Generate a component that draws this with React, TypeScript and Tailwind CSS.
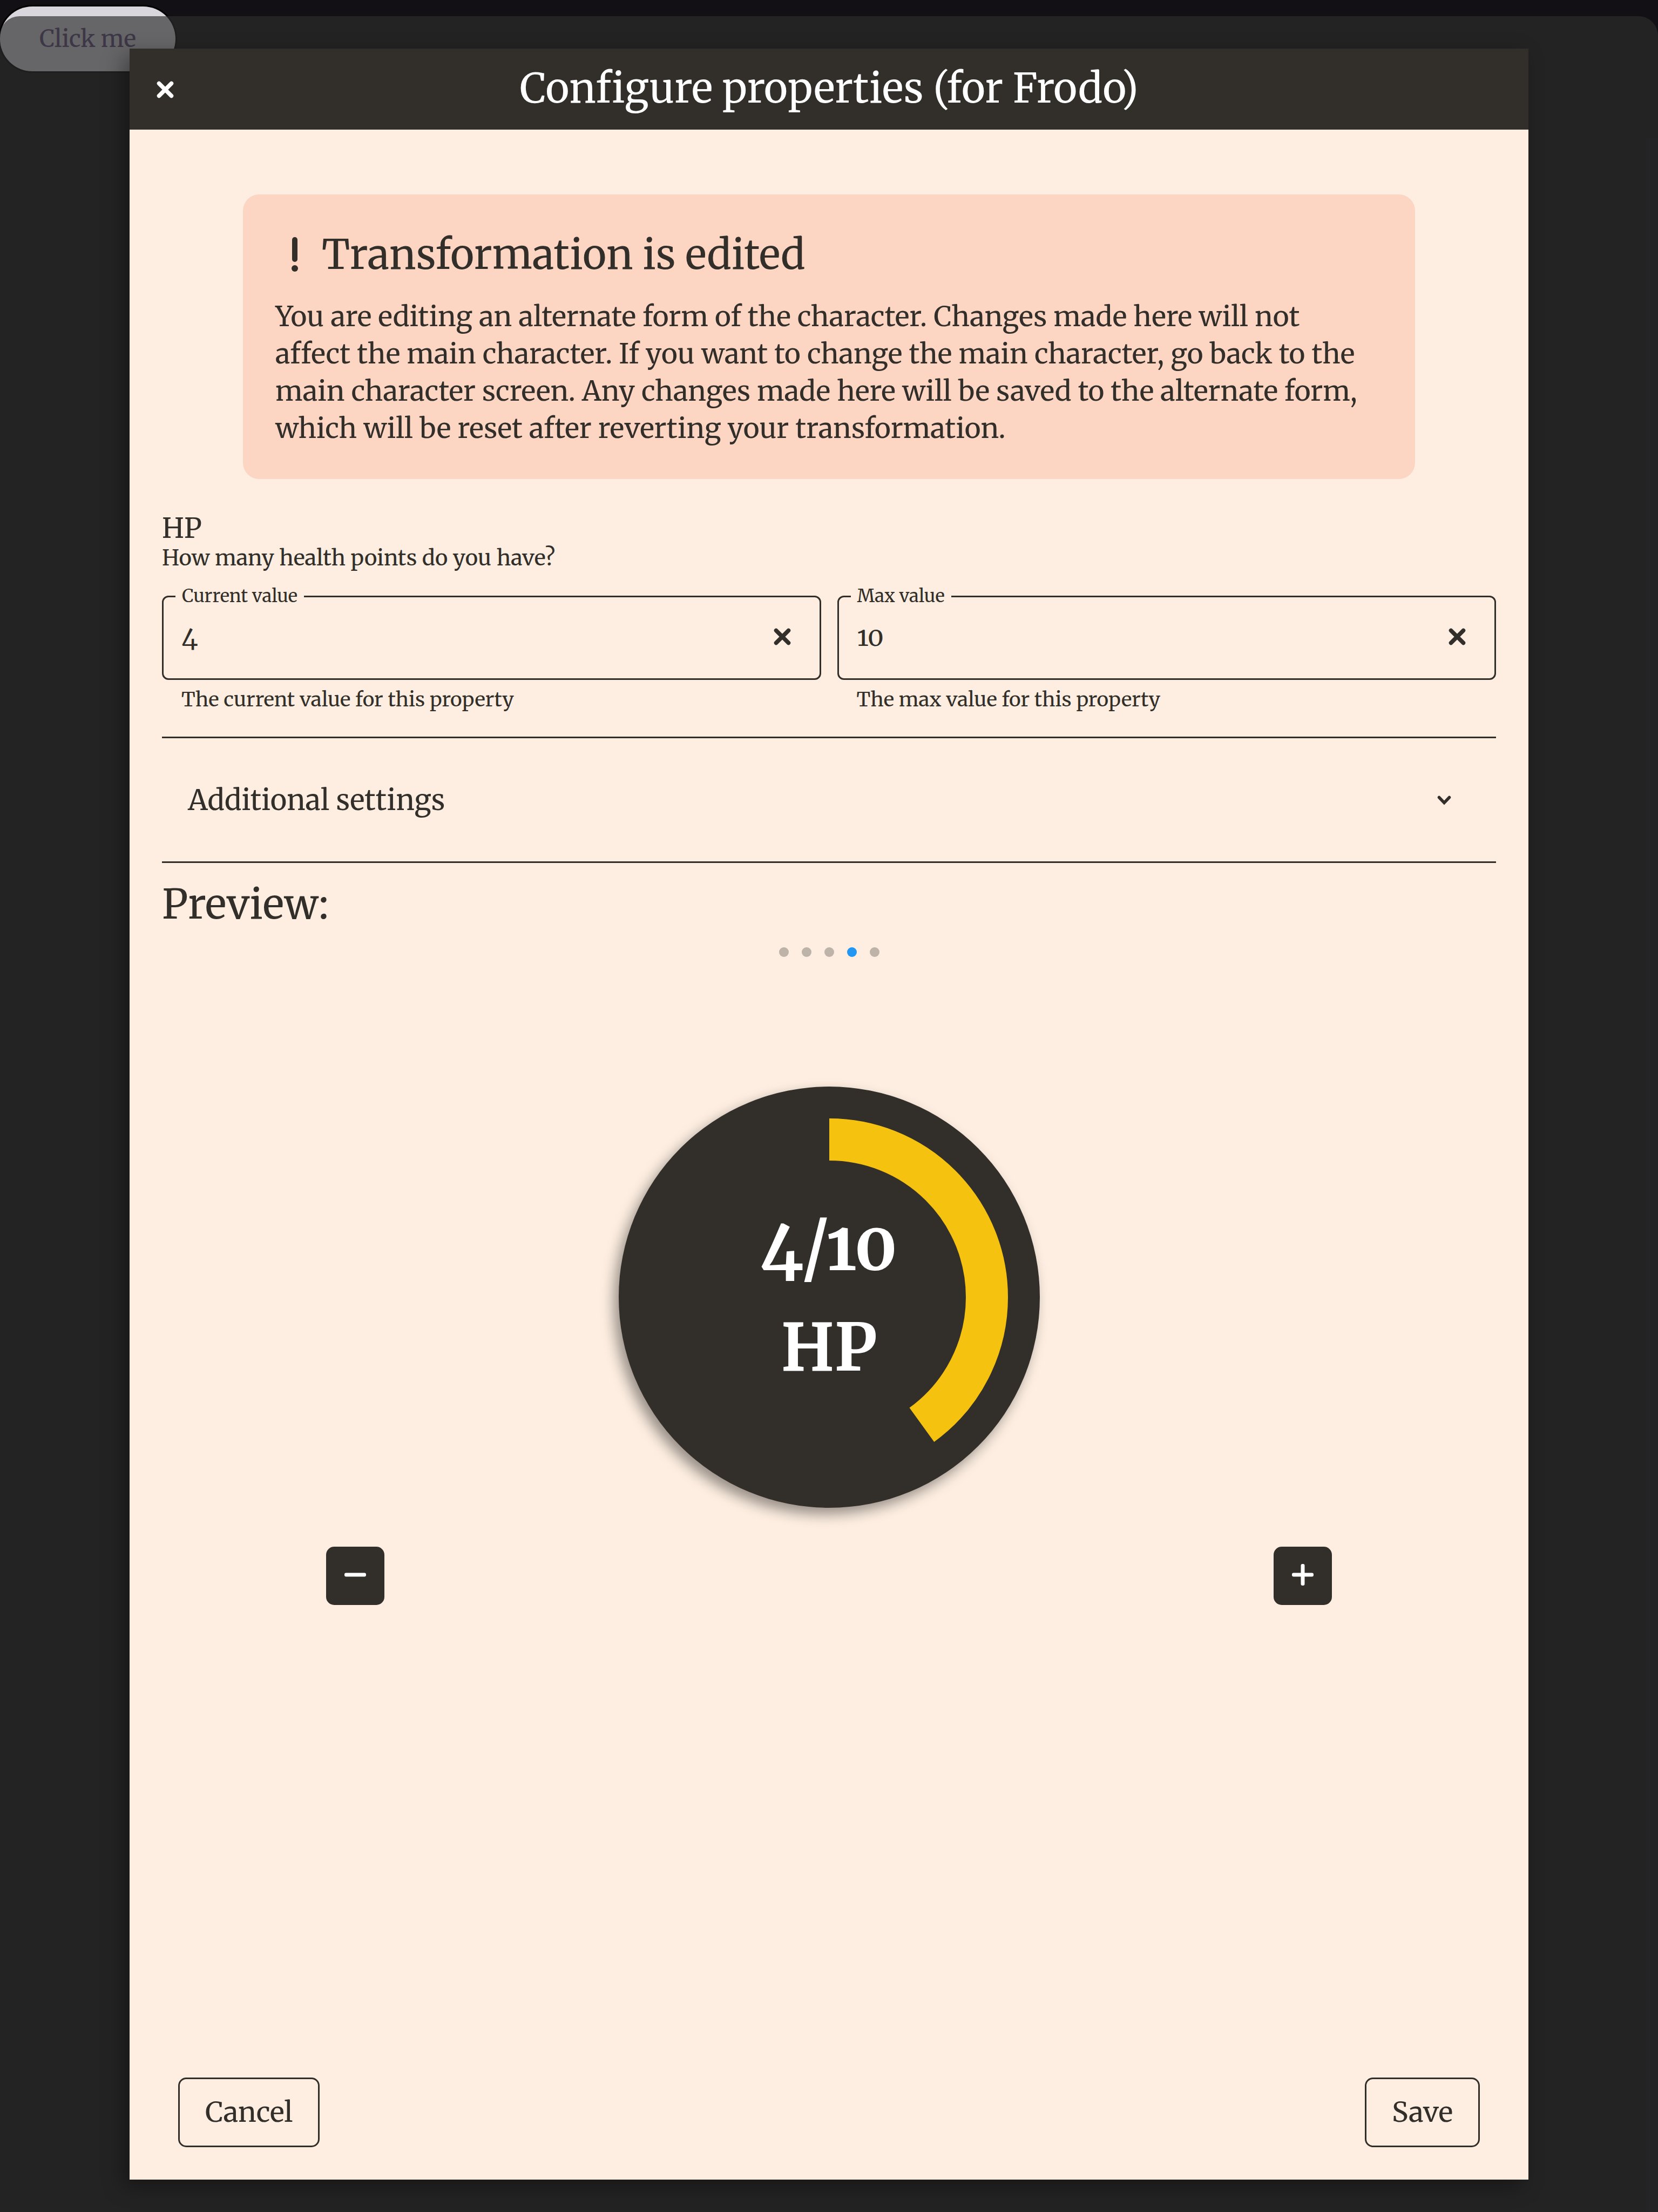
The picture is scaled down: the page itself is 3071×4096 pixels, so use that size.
import { useState } from "react";

function CrossIcon() {
  return (
    <svg viewBox="0 0 32 32" className="size-8" fill="none" stroke="currentColor" strokeWidth="7.5" strokeLinecap="round" aria-hidden="true">
      <path d="M4.5 4.5 27.5 27.5M27.5 4.5 4.5 27.5" />
    </svg>
  );
}

function ExclamationIcon() {
  return (
    <svg viewBox="0 0 12 64" className="h-16 w-3" fill="currentColor" aria-hidden="true">
      <rect x="1" y="0" width="10" height="46" rx="5" />
      <circle cx="6" cy="58" r="6" />
    </svg>
  );
}

function ChevronIcon() {
  return (
    <svg viewBox="0 0 48 48" className="size-12" fill="none" stroke="currentColor" strokeWidth="5.5" strokeLinecap="round" aria-hidden="true">
      <path d="M14.5 18.5 24 28.5 33.5 18.5" />
    </svg>
  );
}

function StepIcon({ plus }: { plus?: boolean }) {
  return (
    <svg viewBox="0 0 40 40" className="size-10" fill="currentColor" aria-hidden="true">
      <rect x="0" y="16.5" width="40" height="7" rx="3" />
      {plus && <rect x="16.5" y="0" width="7" height="40" rx="3" />}
    </svg>
  );
}

type FieldProps = {
  id: string;
  label: string;
  helper: string;
  value: string;
  onChange: (value: string) => void;
};

function NumberField({ id, label, helper, value, onChange }: FieldProps) {
  return (
    <div className="min-w-0">
      <fieldset className="min-w-0 rounded-xl border-3 border-[#322e29] pb-6">
        <legend className="ml-[22px] px-3 text-[33px] leading-[44px]">
          <label htmlFor={id}>{label}</label>
        </legend>
        <div className="flex h-[106px] items-center">
          <input
            id={id}
            value={value}
            onChange={(e) => onChange(e.target.value)}
            aria-describedby={`${id}-helper`}
            className="h-full min-w-0 flex-1 bg-transparent pl-[34px] text-5xl oldstyle-nums outline-none"
          />
          <button type="button" aria-label={`Clear ${label}`} onClick={() => onChange("")} className="mr-6 flex size-[90px] items-center justify-center">
            <CrossIcon />
          </button>
        </div>
      </fieldset>
      <p id={`${id}-helper`} className="mt-3 pl-9 text-[37px] leading-[48px]">
        {helper}
      </p>
    </div>
  );
}

const RING_RADIUS = 292;
const RING_LENGTH = 2 * Math.PI * RING_RADIUS;

function HealthDial({ current, max }: { current: number; max: number }) {
  const ratio = max > 0 ? Math.min(1, Math.max(0, current / max)) : 0;
  return (
    <div className="grid size-[780px] place-items-center rounded-full bg-[#322e29] text-white shadow-[-9px_12px_24px_rgba(0,0,0,0.4)]">
      <svg viewBox="0 0 780 780" className="size-full [grid-area:1/1]" aria-hidden="true">
        <circle
          cx="390"
          cy="390"
          r={RING_RADIUS}
          fill="none"
          stroke="#f5c20f"
          strokeWidth="78"
          strokeDasharray={`${RING_LENGTH * ratio} ${RING_LENGTH}`}
          transform="rotate(-90 390 390)"
        />
      </svg>
      <div className="text-center leading-[188px] font-bold oldstyle-nums [grid-area:1/1]">
        <p className="text-[124px] leading-[188px]">{`${current}/${max}`}</p>
        <p className="text-[120px] leading-[188px]">HP</p>
      </div>
    </div>
  );
}

const PAGES = [0, 1, 2, 3, 4];

export default function App() {
  const [current, setCurrent] = useState("4");
  const [max, setMax] = useState("10");
  const [page, setPage] = useState(3);
  const step = (by: number) => setCurrent(String((Number(current) || 0) + by));

  return (
    <div className="grid min-h-screen overflow-hidden bg-[#121015] font-['Merriweather','DejaVu_Serif',serif] text-[#322e29]">
      <div className="flex items-start pt-3 [grid-area:1/1]">
        <button type="button" className="h-[120px] rounded-full bg-[#dad6de] px-[73px] text-[43px] text-[#5c4b7a] shadow-[0_0_0_3px_#000]">
          Click me
        </button>
      </div>

      <div className="z-10 mt-[30px] flex rounded-t-[36px] bg-[#2d2d2d]/67 px-60 py-15 [grid-area:1/1]">
        <div role="dialog" aria-labelledby="dialog-title" className="flex min-w-0 flex-1 flex-col bg-[#fdeee1] shadow-[-12px_12px_36px_rgba(0,0,0,0.35)]">
          <header className="grid h-[150px] grid-cols-[132px_1fr_132px] items-center bg-[#322e29] text-white">
            <button type="button" aria-label="Close" className="flex size-full items-center justify-center pt-0.5">
              <CrossIcon />
            </button>
            <h1 id="dialog-title" className="pb-1 text-center text-[75px] leading-[96px]">
              Configure properties (for Frodo)
            </h1>
          </header>

          <main className="flex flex-1 flex-col px-15 pt-[120px]">
            <section className="mx-[150px] rounded-[30px] bg-[#fdd5c3] px-15 pt-15 pb-[59px]">
              <h2 className="flex items-center pl-[30px] text-[75px] leading-[102px]">
                <ExclamationIcon />
                <span className="pl-11">Transformation is edited</span>
              </h2>
              <p className="mt-[30px] pr-4 text-[51px] leading-[69px]">
                You are editing an alternate form of the character. Changes made here will not affect the main character. If you want to
                change the main character, go back to the main character screen. Any changes made here will be saved to the alternate
                form, which will be reset after reverting your transformation.
              </p>
            </section>

            <section className="mt-[61px]">
              <h3 className="text-[51px] leading-[60px]">HP</h3>
              <p className="text-[40px] leading-[50px]">How many health points do you have?</p>
              <div className="mt-6 grid grid-cols-2 gap-[30px]">
                <NumberField id="current" label="Current value" helper="The current value for this property" value={current} onChange={setCurrent} />
                <NumberField id="max" label="Max value" helper="The max value for this property" value={max} onChange={setMax} />
              </div>
            </section>

            <button type="button" aria-expanded="false" className="mt-[45px] flex h-[234px] items-center justify-between border-y-3 border-[#322e29] pt-0.5 pr-18 pl-12 text-[52px]">
              Additional settings
              <ChevronIcon />
            </button>

            <h2 className="mt-7 text-[75px] leading-[96px]">Preview:</h2>

            <div className="mt-8 flex justify-center gap-6">
              {PAGES.map((p) => (
                <button
                  key={p}
                  type="button"
                  aria-label={`Preview ${p + 1}`}
                  onClick={() => setPage(p)}
                  className={p === page ? "size-[18px] rounded-full bg-[#2196f3]" : "size-[18px] rounded-full bg-[#beb3a9]"}
                />
              ))}
            </div>

            <div className="mt-60 flex justify-center">
              <HealthDial current={Number(current) || 0} max={Number(max) || 0} />
            </div>

            <div className="mt-18 flex justify-between px-[304px] text-white">
              <button type="button" aria-label="Decrease" onClick={() => step(-1)} className="flex size-[108px] items-center justify-center rounded-[15px] bg-[#322e29] pb-1">
                <StepIcon />
              </button>
              <button type="button" aria-label="Increase" onClick={() => step(1)} className="flex size-[108px] items-center justify-center rounded-[15px] bg-[#322e29] pb-1">
                <StepIcon plus />
              </button>
            </div>
          </main>

          <footer className="flex justify-between px-[90px] pb-15 text-[51px]">
            <button type="button" className="h-[129px] rounded-[15px] border-3 border-[#322e29] px-[47px]">
              Cancel
            </button>
            <button type="button" className="h-[129px] rounded-[15px] border-3 border-[#322e29] px-[47px]">
              Save
            </button>
          </footer>
        </div>
      </div>
    </div>
  );
}
